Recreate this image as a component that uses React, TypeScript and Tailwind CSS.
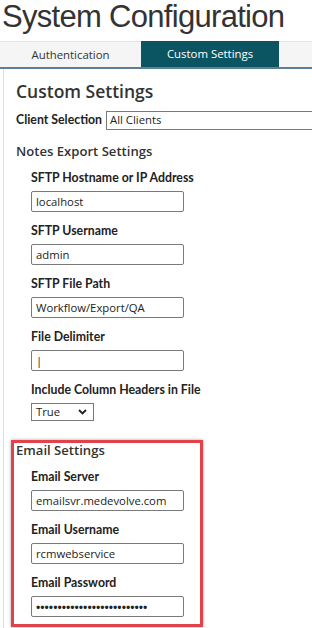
import React from 'react'

const ui = { fontFamily: '"Open Sans", "Noto Sans", sans-serif' }
const bold = { fontFamily: 'Lato, "Open Sans", sans-serif' }

function Field({ label, value, first, secret }: any){
  return (
    <div className="ml-[15px]">
      <div className={`${first ? 'mt-[9px]' : 'mt-[11px]'} h-[16px] leading-[16px] text-[12.3px] font-bold text-[#222] whitespace-nowrap`} style={bold}>{label}</div>
      <input
        readOnly
        value={value}
        className={`mt-[5px] block w-[153px] h-[21px] border border-[#7a7a7a] rounded-[2px] px-[4px] text-[#222] bg-white outline-none ${secret ? 'text-[11.4px] font-bold' : 'text-[11.3px]'}`}
        style={ui}
      />
    </div>
  )
}

export default function App(){
  return (
    <div className="w-[312px] h-[628px] overflow-hidden bg-white" style={ui}>
      <h1 className="text-[31px] leading-[34px] text-[#333] pl-[2px] tracking-[-0.7px]" style={{ fontFamily: '"Liberation Sans", Arial, sans-serif' }}>System Configuration</h1>
      <div className="mt-[7px] flex h-[28px] bg-[#f5f5f5] border-t border-[#e4e4e4] border-b-2 border-b-[#5e7f99]">
        <div className="w-[141px] flex items-center justify-center text-[11.4px] text-[#333]">Authentication</div>
        <div className="w-[138px] -mt-px flex items-center justify-center text-[11.4px] text-white bg-[#0b5563]">Custom Settings</div>
      </div>
      <div className="ml-[3px] border-l border-[#e0e0e0] pl-[12px] h-full">
        <div className="text-[17.5px] font-semibold text-[#333] pt-[10px] leading-[24px]">Custom Settings</div>
        <div className="flex items-center mt-[8px] whitespace-nowrap">
          <span className="text-[12.3px] font-bold text-[#222] mr-[4px]" style={bold}>Client Selection</span>
          <div className="h-[19px] border border-[#7a7a7a] flex-1 -mr-[20px] flex items-center px-[3px] text-[11.3px] text-[#222]">All Clients</div>
        </div>
        <div className="text-[13.1px] font-semibold text-[#333] mt-[11px] leading-[20px]">Notes Export Settings</div>
        <Field first label="SFTP Hostname or IP Address" value="localhost" />
        <Field label="SFTP Username" value="admin" />
        <Field label="SFTP File Path" value="Workflow/Export/QA" />
        <Field label="File Delimiter" value="|" />
        <div className="ml-[15px]">
          <div className="mt-[11px] h-[16px] leading-[16px] text-[12.3px] font-bold text-[#222]" style={bold}>Include Column Headers in File</div>
          <div className="mt-[5px] w-[63px] h-[18px] border border-[#7a7a7a] flex items-center justify-between pl-[4px] pr-[6px] text-[11.3px] text-[#222]">
            <span>True</span>
            <svg width="9" height="6" viewBox="0 0 9 6"><path d="M1 1 L4.5 4.5 L8 1" fill="none" stroke="#222" strokeWidth="1.8"/></svg>
          </div>
        </div>
        <div className="mt-[19px] -ml-[5px] w-[192px] border-[3px] border-[#e2434b] shadow-[0_0_3px_rgba(0,0,0,0.35)] pl-[2px] pb-[7px]">
          <div className="text-[13.1px] font-semibold text-[#333] leading-[14px]">Email Settings</div>
          <div className="h-[1px]" />
          <Field label="Email Server" value="emailsvr.medevolve.com" />
          <Field label="Email Username" value="rcmwebservice" />
          <Field secret label="Email Password" value="••••••••••••••••••••••••••" />
        </div>
      </div>
    </div>
  )
}
